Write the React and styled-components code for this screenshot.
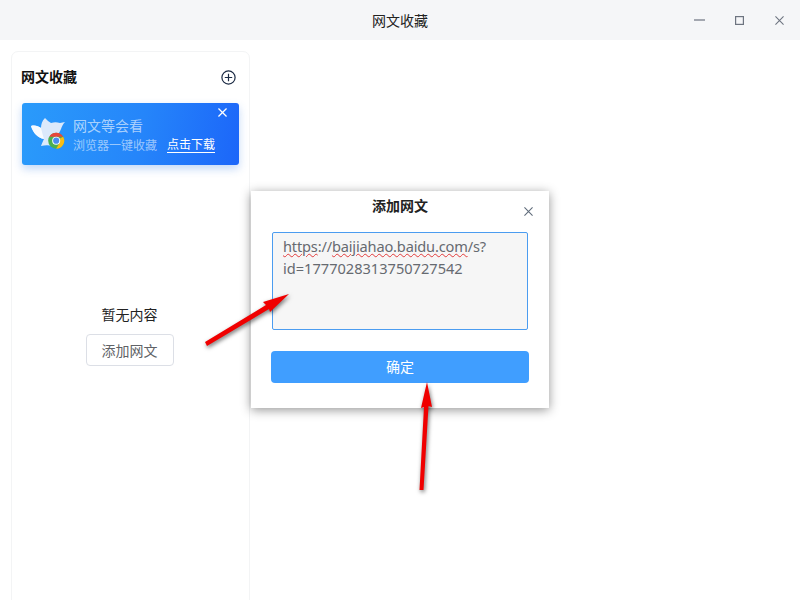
import styled, { createGlobalStyle } from "styled-components"

const Global = createGlobalStyle`
    html, body { margin: 0; padding: 0; background: #fff; }
    body { font-family: "Noto Sans CJK SC", "Noto Sans", sans-serif; }
    * { box-sizing: border-box; }
`

const Page = styled.div`
    position: relative;
    width: 800px;
    height: 600px;
    overflow: hidden;
    display: flex;
    flex-direction: column;
`

const TitleBar = styled.header`
    position: relative;
    height: 40px;
    flex: none;
    background: #f5f6f8;
    display: flex;
    align-items: center;
    justify-content: center;
    font-size: 14px;
    color: #222;
`

const WindowControls = styled.div`
    position: absolute;
    top: 0;
    right: 1px;
    height: 40px;
    display: flex;
    align-items: center;
`

const WindowButton = styled.button`
    width: 40px;
    height: 40px;
    padding: 0;
    border: 0;
    background: none;
    display: flex;
    align-items: center;
    justify-content: center;
`

const Body = styled.main`
    flex: 1;
    padding: 11px 0 0 11px;
    display: flex;
`

const Sidebar = styled.aside`
    width: 239px;
    height: 600px;
    border: 1px solid #f3f4f5;
    border-radius: 7px;
    padding: 0 10px;
    display: flex;
    flex-direction: column;
`

const SidebarHeader = styled.div`
    height: 51px;
    flex: none;
    display: flex;
    align-items: center;
    justify-content: space-between;
    padding: 0 3px 0 0;
`

const SidebarTitle = styled.h2`
    margin: 0 0 3px -1px;
    font-size: 14px;
    font-weight: 700;
    color: #111;
`

const Banner = styled.div`
    position: relative;
    width: 217px;
    height: 62px;
    flex: none;
    border-radius: 3px;
    background: linear-gradient(100deg, #2a9bfb 0%, #2585fa 55%, #1c66f9 100%);
    box-shadow: 0 4px 9px rgba(60, 130, 230, 0.3);
    display: flex;
    align-items: center;
    padding-left: 8px;
    color: #fff;
`

const BannerText = styled.div`
    margin-left: 7px;
    display: flex;
    flex-direction: column;
    gap: 1px;
`

const BannerTitle = styled.div`
    font-size: 14px;
    line-height: 20px;
    color: rgba(255, 255, 255, 0.62);
`

const BannerRow = styled.div`
    display: flex;
    align-items: center;
    gap: 10px;
    font-size: 12px;
    line-height: 18px;
`

const BannerHint = styled.span`
    color: rgba(255, 255, 255, 0.55);
`

const BannerLink = styled.a`
    color: #fff;
    border-bottom: 1px solid #fff;
    line-height: 16px;
`

const BannerClose = styled.span`
    position: absolute;
    top: 5px;
    right: 12px;
    display: flex;
`

const Empty = styled.div`
    margin-top: 139px;
    display: flex;
    flex-direction: column;
    align-items: center;
    gap: 10px;
    width: 215px;
`

const EmptyText = styled.div`
    font-size: 14px;
    line-height: 20px;
    color: #222;
`

const GhostButton = styled.button`
    width: 88px;
    height: 32px;
    padding: 0;
    background: #fff;
    border: 1px solid #dcdfe6;
    border-radius: 4px;
    font: inherit;
    font-size: 14px;
    color: #606266;
`

const Dialog = styled.section`
    position: absolute;
    left: 251px;
    top: 191px;
    width: 298px;
    height: 217px;
    background: #fff;
    box-shadow: 0 2px 10px rgba(0, 0, 0, 0.42);
    padding: 0 20px;
`

const DialogTitle = styled.h3`
    margin: 4px 0 0;
    height: 20px;
    font-size: 14px;
    line-height: 20px;
    font-weight: 700;
    text-align: center;
    color: #222;
`

const DialogClose = styled.span`
    position: absolute;
    top: 16px;
    right: 16px;
    display: flex;
`

const UrlBox = styled.div`
    margin: 17px 1px 0;
    height: 98px;
    padding: 3px 10px;
    background: #f6f6f6;
    border: 1px solid #4b9cf0;
    border-radius: 2px;
    font-family: "Noto Sans", sans-serif;
    font-size: 14.6px;
    line-height: 21.5px;
    color: #666a70;
    word-break: break-all;
`

const UrlLine = styled.span`
    letter-spacing: -0.17px;
`

const Misspelled = styled.span`
    text-decoration: underline wavy #e23b3b 1px;
    text-underline-offset: 1px;
`

const ConfirmButton = styled.button`
    display: block;
    width: 258px;
    height: 32px;
    margin-top: 21px;
    padding: 0 0 2px;
    background: #409eff;
    border: 0;
    border-radius: 4px;
    font: inherit;
    font-size: 14px;
    color: #fff;
`

const Arrows = styled.svg`
    position: absolute;
    left: 0;
    top: 0;
    pointer-events: none;
    filter: drop-shadow(1px 2px 2px rgba(0, 0, 0, 0.55));
`

function CloseIcon({ size = 10, color = "#5f6b7a", width = 1.2 }) {
    return (
        <svg width={size} height={size} viewBox="0 0 10 10">
            <path d="M0.5 0.5 9.5 9.5M9.5 0.5 0.5 9.5" stroke={color} strokeWidth={width} fill="none" />
        </svg>
    )
}

function Dove() {
    return (
        <svg width="36" height="34" viewBox="0 0 36 34">
            <path
                d="M1 9C5 8 8 9 11 11C11 7 12 4 15 1C17 3 19 5 21 6C24 5 27 5 30 6L35 5C33 7 32 9 31 12C29 17 26 20 21 22L23 29C19 28 15 28 11 29C12 26 13 24 14 22C8 21 3 16 1 9Z"
                fill="#dbe9fb"
            />
            <path d="M1 9C5 8 8 9 11 11C12 15 13 19 14 22C8 21 3 16 1 9Z" fill="#f7fbff" />
            <g transform="translate(26.2 23.7)">
                <circle r="8" fill="#4caf50" />
                <path d="M-6.93 -4A8 8 0 0 1 6.93 -4L0 -4Z" fill="#e8453c" />
                <path d="M6.93 -4A8 8 0 0 1 0 8L3.46 2L3.46 -2Z" fill="#f9bc15" />
                <circle r="4" fill="#fff" />
                <circle r="3.1" fill="#4a8df0" />
            </g>
        </svg>
    )
}

export default function App() {
    return (
        <Page>
            <Global />
            <TitleBar>
                网文收藏
                <WindowControls>
                    <WindowButton>
                        <svg width="11" height="2" viewBox="0 0 11 2">
                            <path d="M0 1H11" stroke="#6d7480" strokeWidth="1.2" />
                        </svg>
                    </WindowButton>
                    <WindowButton>
                        <svg width="9" height="9" viewBox="0 0 9 9">
                            <rect x="0.6" y="0.6" width="7.8" height="7.8" stroke="#6d7480" strokeWidth="1.2" fill="none" />
                        </svg>
                    </WindowButton>
                    <WindowButton>
                        <CloseIcon size={9} color="#6d7480" />
                    </WindowButton>
                </WindowControls>
            </TitleBar>
            <Body>
                <Sidebar>
                    <SidebarHeader>
                        <SidebarTitle>网文收藏</SidebarTitle>
                        <svg width="15" height="15" viewBox="0 0 15 15">
                            <circle cx="7.5" cy="7.5" r="6.6" stroke="#1b2a44" strokeWidth="1.2" fill="none" />
                            <path d="M3.8 7.5H11.2M7.5 3.8V11.2" stroke="#1b2a44" strokeWidth="1.2" />
                        </svg>
                    </SidebarHeader>
                    <Banner>
                        <Dove />
                        <BannerText>
                            <BannerTitle>网文等会看</BannerTitle>
                            <BannerRow>
                                <BannerHint>浏览器一键收藏</BannerHint>
                                <BannerLink>点击下载</BannerLink>
                            </BannerRow>
                        </BannerText>
                        <BannerClose>
                            <CloseIcon size={9} color="#fff" width={1.4} />
                        </BannerClose>
                    </Banner>
                    <Empty>
                        <EmptyText>暂无内容</EmptyText>
                        <GhostButton>添加网文</GhostButton>
                    </Empty>
                </Sidebar>
            </Body>
            <Dialog>
                <DialogTitle>添加网文</DialogTitle>
                <DialogClose>
                    <CloseIcon size={9} />
                </DialogClose>
                <UrlBox>
                    <UrlLine>
                        <Misspelled>https</Misspelled>://<Misspelled>baijiahao.baidu.com</Misspelled>/s?
                    </UrlLine>
                    <br />
                    id=1777028313750727542
                </UrlBox>
                <ConfirmButton>确定</ConfirmButton>
            </Dialog>
            <Arrows width="800" height="600" viewBox="0 0 800 600">
                <polygon
                    points="205,342 266,305 263,302 289,294 270,312 269,309 207,346"
                    fill="#f00000"
                />
                <polygon
                    points="419.5,490 424,407 421,408 427,382 432,407 428.5,406 423.5,490"
                    fill="#f00000"
                />
            </Arrows>
        </Page>
    )
}
